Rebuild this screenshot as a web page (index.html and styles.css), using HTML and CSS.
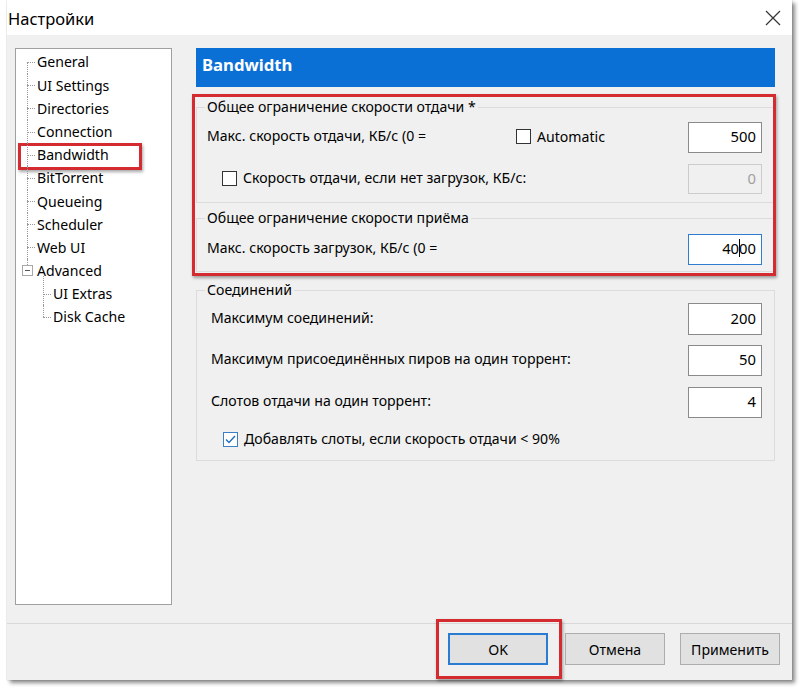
FILE: index.html
```html
<!DOCTYPE html>
<html lang="ru">
<head>
<meta charset="utf-8">
<title>Настройки</title>
<link rel="stylesheet" href="styles.css">
</head>
<body>
<div class="dialog">
  <div class="titlebar">
    <span class="title">Настройки</span>
    <svg class="close" width="16" height="16" viewBox="0 0 16 16"><path d="M1 1L15 15M15 1L1 15" stroke="#333" stroke-width="1.2" fill="none"/></svg>
  </div>
  <div class="main">
    <div class="tree">
      <ul class="level1">
        <li class="node first">General</li>
        <li class="node">UI Settings</li>
        <li class="node">Directories</li>
        <li class="node">Connection</li>
        <li class="node marked">Bandwidth<span class="mark mark-tree"></span></li>
        <li class="node">BitTorrent</li>
        <li class="node">Queueing</li>
        <li class="node">Scheduler</li>
        <li class="node">Web UI</li>
        <li class="node last expander"><span class="minus"></span>Advanced</li>
      </ul>
      <ul class="level2">
        <li class="node sub first">UI Extras</li>
        <li class="node sub last">Disk Cache</li>
      </ul>
    </div>
    <div class="panel">
      <div class="header">Bandwidth</div>
      <div class="limits">
        <fieldset class="group g1">
          <legend>Общее ограничение скорости отдачи *</legend>
          <div class="row r1">
            <span class="lbl lbl-wide">Макс. скорость отдачи, КБ/с (0 =</span>
            <span class="check"><span class="box"></span><span class="ctext">Automatic</span></span>
            <span class="input">500</span>
          </div>
          <div class="row r2">
            <span class="check indent"><span class="box"></span><span class="ctext">Скорость отдачи, если нет загрузок, КБ/с:</span></span>
            <span class="input disabled">0</span>
          </div>
        </fieldset>
        <fieldset class="group g2">
          <legend>Общее ограничение скорости приёма</legend>
          <div class="row r3">
            <span class="lbl">Макс. скорость загрузок, КБ/с (0 =</span>
            <span class="input focus">40<span class="caret"></span>00</span>
          </div>
        </fieldset>
        <span class="mark mark-limits"></span>
      </div>
      <fieldset class="group g3">
        <legend>Соединений</legend>
        <div class="row c1">
          <span class="lbl lbl-c">Максимум соединений:</span>
          <span class="input tall">200</span>
        </div>
        <div class="row c2">
          <span class="lbl lbl-c">Максимум присоединённых пиров на один торрент:</span>
          <span class="input">50</span>
        </div>
        <div class="row c3">
          <span class="lbl lbl-c">Слотов отдачи на один торрент:</span>
          <span class="input">4</span>
        </div>
        <div class="row c4">
          <span class="check indent2"><span class="box checked"><svg width="13" height="13" viewBox="0 0 13 13"><path d="M2 6.5L5 9.5L11 3" stroke="#1f6fc0" stroke-width="1.4" fill="none"/></svg></span><span class="ctext">Добавлять слоты, если скорость отдачи &lt; 90%</span></span>
        </div>
      </fieldset>
    </div>
  </div>
  <div class="footer">
    <button class="btn btn-ok">OK<span class="mark mark-ok"></span></button>
    <button class="btn btn-cancel">Отмена</button>
    <button class="btn btn-apply">Применить</button>
  </div>
</div>
</body>
</html>
```

FILE: styles.css
```css
* { box-sizing: border-box; }
html, body { margin: 0; padding: 0; background: #ffffff; }
body {
  font-family: "Noto Sans", "Open Sans", sans-serif;
  font-size: 14.1px;
  color: #000;
  width: 800px;
  height: 690px;
  overflow: hidden;
}
.dialog {
  margin-left: 7px;
  width: 785px;
  height: 680px;
  background: #f0f0f0;
  box-shadow: 0 0 1px rgba(0,0,0,0.35), 3px 3px 4px rgba(0,0,0,0.45);
  display: flex;
  flex-direction: column;
}
.titlebar {
  height: 35px;
  background: #ffffff;
  display: flex;
  align-items: center;
  justify-content: space-between;
  padding: 0 11px 0 1px;
}
.title { font-size: 16.5px; padding-top: 2px; }
.close { display: block; }

.main {
  height: 588px;
  display: flex;
  align-items: flex-start;
  padding: 13px 0 0 8px;
}
.tree {
  width: 157px;
  height: 557px;
  background: #fff;
  border: 1px solid #a0a0a0;
  padding-top: 1.4px;
}
.tree ul { list-style: none; margin: 0; padding: 0; }
.node {
  position: relative;
  height: 23.2px;
  line-height: 23.2px;
  padding-left: 21px;
  white-space: nowrap;
}
.node::before {
  content: "";
  position: absolute;
  left: 11px;
  width: 8px;
  top: 50%;
  border-top: 1px dotted #9a9a9a;
}
.node::after {
  content: "";
  position: absolute;
  left: 11px;
  top: 0;
  bottom: 0;
  border-left: 1px dotted #9a9a9a;
}
.node.first::after { top: 50%; }
.node.last::after { bottom: 50%; }
.expander::before { display: none; }
.expander::after { bottom: 70%; }
.minus {
  position: absolute;
  left: 6px;
  top: 6px;
  width: 11px;
  height: 11px;
  border: 1px solid #a8a8a8;
  background: #fff;
  z-index: 1;
}
.minus::after {
  content: "";
  position: absolute;
  left: 2px;
  right: 2px;
  top: 4px;
  border-top: 1px solid #555;
}
.level2 .node { padding-left: 37px; }
.level2 .node::before { left: 27px; width: 8px; }
.level2 .node::after { left: 27px; }
.level2 .node.first::after { top: -6px; }

.mark {
  position: absolute;
  border: 3px solid #d42b31;
  box-shadow: 1px 2px 3px rgba(0,0,0,0.35);
  pointer-events: none;
}
.mark-tree { left: 2px; top: 0; width: 124px; height: 27px; }

.panel {
  width: 579px;
  margin-left: 24px;
}
.header {
  height: 39px;
  background: #0a70d6;
  color: #fff;
  font-weight: bold;
  font-size: 16.7px;
  padding-left: 6px;
  line-height: 33px;
}
.limits { position: relative; margin-top: 10px; }
.mark-limits { left: -4px; top: -3px; width: 584px; height: 182px; }

.group {
  margin: 0;
  min-width: 0;
  border: 1px solid #dcdcdc;
  padding: 0 12px 0 8px;
}
.group legend {
  padding: 0 2px;
  line-height: 20px;
  height: 20px;
}
.g1 { padding-bottom: 8px; }
.g2 { margin-top: 5px; padding-bottom: 6px; }
.g3 { margin-top: 8px; padding-bottom: 11px; }

.row { display: flex; align-items: center; }
.r1 { margin-top: 5px; height: 31px; }
.r2 { margin-top: 11px; height: 30px; }
.r3 { margin-top: 6px; height: 31px; }
.c1 { margin-top: 3px; height: 32px; }
.c2 { margin-top: 10px; height: 31px; }
.c3 { margin-top: 11px; height: 31px; }
.c4 { margin-top: 11px; height: 20px; }

.lbl { margin-left: 2px; padding-bottom: 4px; }
.lbl-wide { width: 309px; flex: none; }
.lbl-c { margin-left: 6px; }

.check { display: flex; align-items: center; }
.r1 .check, .r2 .check { padding-bottom: 2px; }
.check.indent { margin-left: 17px; }
.check.indent2 { margin-left: 18px; }
.box {
  width: 15px;
  height: 15px;
  border: 1px solid #333;
  background: #fff;
  margin-right: 6px;
  flex: none;
  display: flex;
  align-items: center;
  justify-content: center;
}
.box.checked { border-color: #3c7fc4; }
.ctext { padding-bottom: 1px; }

.input {
  margin-left: auto;
  width: 74px;
  height: 100%;
  background: #fff;
  border: 1px solid #8a8a8a;
  text-align: right;
  padding: 0 5px 3px 0;
  display: flex;
  align-items: center;
  justify-content: flex-end;
  font-size: 14.8px;
}
.input.disabled { background: #f0f0f0; border-color: #cccccc; color: #a0a0a0; }
.input.focus { border-color: #2f7cd0; }
.caret { display: inline-block; width: 1px; height: 18px; background: #000; margin: 0 -0.5px; }

.footer {
  height: 57px;
  border-top: 1px solid #d8d8d8;
  display: flex;
  justify-content: flex-end;
  align-items: flex-start;
  padding: 9px 12px 0 0;
}
.btn {
  position: relative;
  width: 100px;
  height: 32px;
  background: #e1e1e1;
  border: 1px solid #adadad;
  font-family: inherit;
  font-size: 14.1px;
  color: #000;
  padding: 0;
}
.btn-ok { border: 2px solid #2a7bd2; }
.btn-cancel { margin-left: 17px; }
.btn-apply { margin-left: 15px; }
.mark-ok { left: -14px; top: -16px; width: 126px; height: 60px; }
```
